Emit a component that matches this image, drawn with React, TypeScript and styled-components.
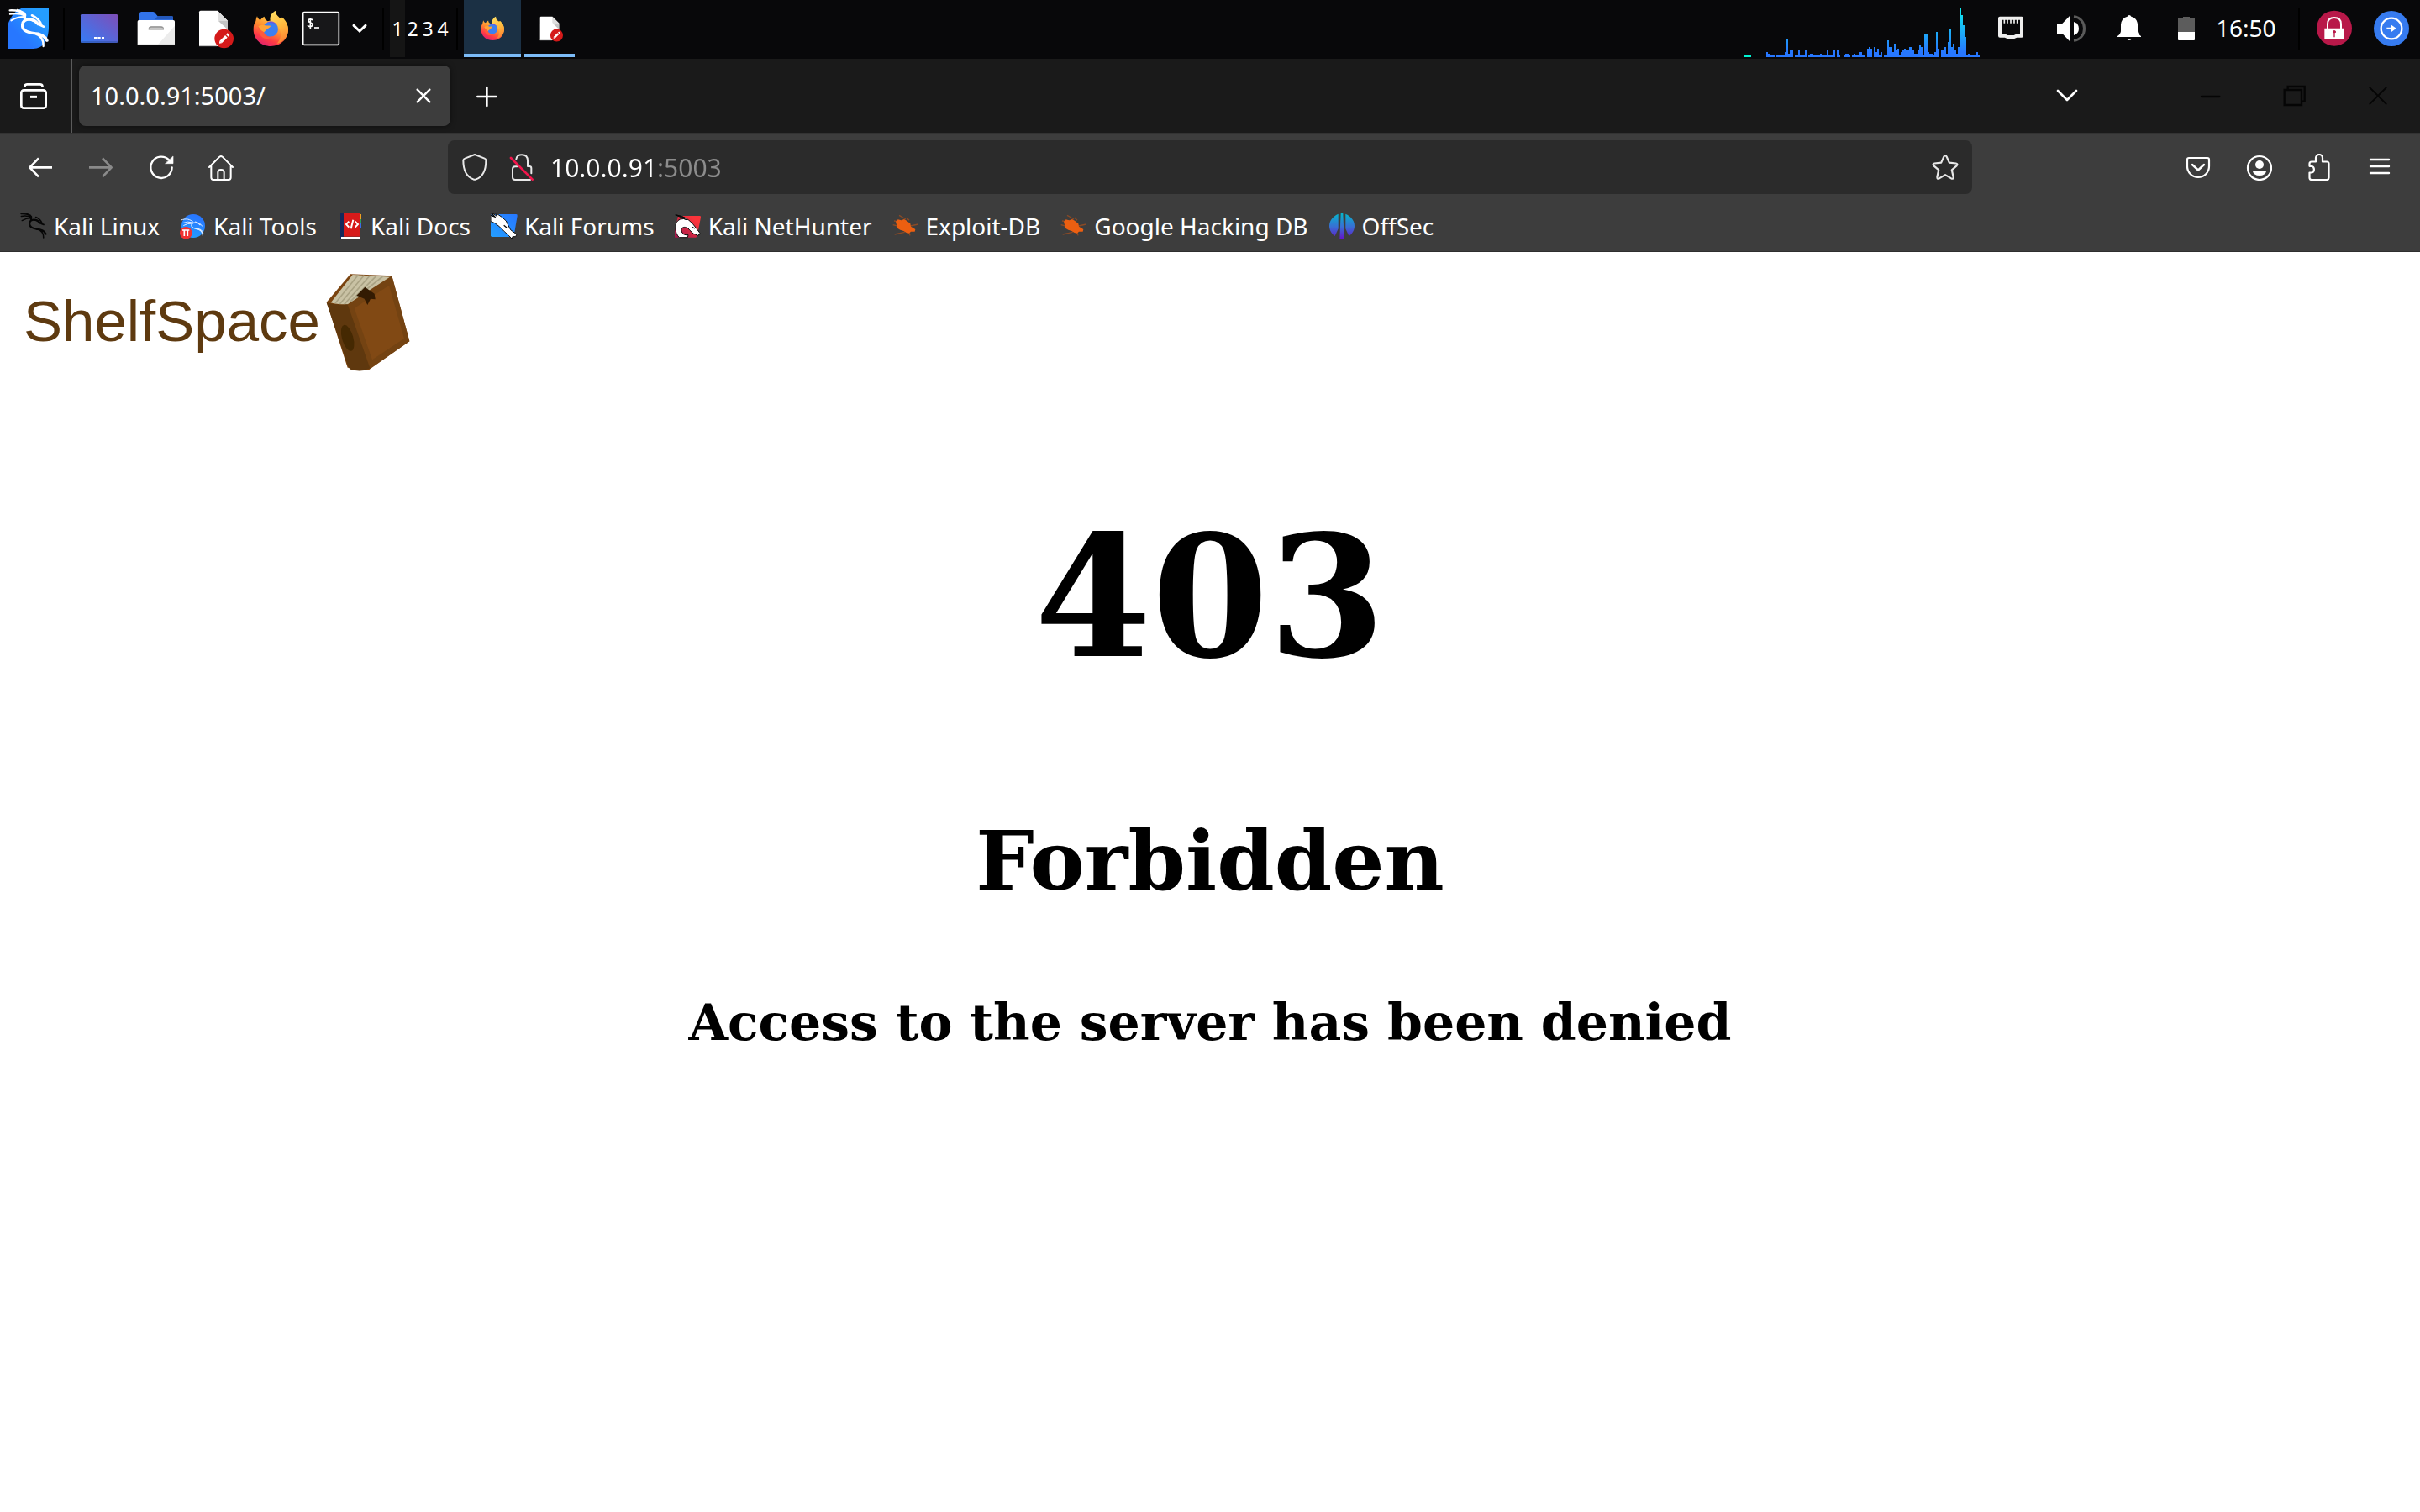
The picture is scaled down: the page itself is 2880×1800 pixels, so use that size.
import React from 'react';
import styled, { createGlobalStyle } from 'styled-components';

const GlobalStyle = createGlobalStyle`
  *, *::before, *::after { box-sizing: border-box; }
  html, body, #root { height: 100%; }
  body {
    margin: 0;
    background: #fff;
    font-family: "Noto Sans", "Open Sans", sans-serif;
    font-size: 28px;
  }
  svg { display: block; flex: none; }
`;

const Screen = styled.div`
  min-height: 100%;
  display: flex;
  flex-direction: column;
`;

/* ---------- desktop panel ---------- */

const Panel = styled.header`
  display: flex;
  align-items: flex-start;
  height: 70px;
  background: #08080a;
  color: #fff;
`;

const PanelGroup = styled.div`
  display: flex;
  height: 68px;
`;

const Filler = styled.div`
  flex: 1;
`;

const PanelButton = styled.button<{ $width?: number; $active?: boolean }>`
  display: flex;
  align-items: center;
  justify-content: center;
  width: ${(p) => p.$width ?? 68}px;
  height: 68px;
  padding: 0;
  border: 0;
  background: ${(p) => (p.$active ? '#1b3044' : 'transparent')};
  color: inherit;
`;

const TaskButton = styled(PanelButton)`
  &::after {
    content: '';
    position: absolute;
    width: ${(p) => (p.$active ? 68 : 60)}px;
    height: 4px;
    top: 64px;
    background: #7cbcf8;
  }
`;

const PanelRule = styled.span`
  width: 2px;
  height: 50px;
  margin: 10px 7px 0;
  background: #000;
`;

const Workspace = styled.button<{ $current?: boolean }>`
  width: 18px;
  height: 68px;
  padding: 0;
  border: 0;
  background: ${(p) => (p.$current ? '#151515' : 'transparent')};
  color: #fff;
  font: 23px/68px "Noto Sans", sans-serif;
  text-align: center;
`;

const GraphArea = styled.div`
  display: flex;
  align-items: flex-end;
  gap: 18px;
  height: 68px;
  margin-right: 8px;
`;

const NetDash = styled.span`
  width: 8px;
  height: 3px;
  background: #00f5d4;
`;

const Clock = styled.time`
  width: 92px;
  padding-left: 1px;
  font-size: 28px;
  line-height: 66px;
`;

/* ---------- browser chrome ---------- */

const TabStrip = styled.div`
  display: flex;
  align-items: center;
  height: 88px;
  background: #1a1a1a;
  color: #fff;
`;

const IconButton = styled.button<{ $width?: number; $tone?: string }>`
  display: flex;
  align-items: center;
  justify-content: center;
  flex: none;
  width: ${(p) => p.$width ?? 72}px;
  height: 64px;
  padding: 0;
  border: 0;
  background: transparent;
  color: ${(p) => p.$tone ?? '#fff'};
`;

const StripRule = styled.span`
  width: 2px;
  height: 88px;
  margin: 0 8px 0 4px;
  background: #5b5b5b;
`;

const Tab = styled.div`
  display: flex;
  align-items: center;
  justify-content: space-between;
  width: 442px;
  height: 72px;
  margin-right: 7px;
  padding-left: 14px;
  border-radius: 8px;
  background: #3d3d3d;
  box-shadow: 0 0 6px rgba(0, 0, 0, 0.5);
`;

const TabTitle = styled.button`
  flex: 1;
  padding: 0;
  border: 0;
  background: transparent;
  color: #fff;
  font: 29px/40px "Noto Sans", sans-serif;
  text-align: left;
`;

const WindowControls = styled.div`
  display: flex;
  margin-left: 84px;
`;

const NavBar = styled.nav`
  display: flex;
  align-items: center;
  height: 81px;
  padding: 0 12px;
  border-top: 1px solid #333;
  background: #3d3d3d;
`;

const AddressBar = styled.form`
  display: flex;
  align-items: center;
  flex: 0 1 1814px;
  height: 64px;
  padding: 0 4px;
  border-radius: 8px;
  background: #2b2b2b;
`;

const AddressInput = styled.input`
  flex: 1;
  height: 64px;
  margin: 0 0 0 6px;
  padding: 0;
  border: 0;
  outline: 0;
  background: linear-gradient(90deg, #fff 126px, #8c8c8c 126px);
  background-clip: text;
  -webkit-text-fill-color: transparent;
  color: #fff;
  font: 30px/40px "Noto Sans", sans-serif;
`;

const Bookmarks = styled.nav`
  display: flex;
  align-items: center;
  gap: 24px;
  height: 61px;
  padding: 0 24px;
  border-bottom: 1px solid #2e2e2e;
  background: #3d3d3d;
`;

const Bookmark = styled.a`
  display: flex;
  align-items: center;
  gap: 8px;
  color: #fff;
  font-size: 28px;
  line-height: 40px;
  text-decoration: none;
  white-space: nowrap;
`;

/* ---------- page ---------- */

const Page = styled.main`
  flex: 1;
  background: #fff;
  color: #000;
`;

const Brand = styled.div`
  display: flex;
  align-items: center;
  gap: 6px;
  padding: 23px 28px 0;
  color: #5e3a10;
  font: 69px/120px "Liberation Sans", Arial, sans-serif;
`;

const ErrorBlock = styled.section`
  padding-top: 152px;
  font-family: "DejaVu Serif", serif;
  text-align: center;
`;

const Code = styled.h1`
  margin: 0 0 141px;
  font-size: 200px;
  line-height: 232px;
`;

const Reason = styled.h2`
  margin: 0 0 100px;
  font-size: 98px;
  line-height: 114px;
`;

const Detail = styled.h3`
  margin: 0;
  font-size: 60px;
  line-height: 70px;
`;

/* ---------- icons ---------- */

const Glyph = ({ box, size = 48, children }: { box: string; size?: number; children: React.ReactNode }) => (
  <svg width={size} height={size} viewBox={box} fill="none" aria-hidden="true">
    {children}
  </svg>
);

const Dragon = () => (
  <g fill="none" stroke="currentColor" strokeLinecap="round" strokeLinejoin="round">
    <path strokeWidth="7" d="M35 37 C58 36 74 38 90 52 M36 50 C58 46 74 48 90 56" />
    <path strokeWidth="6" d="M40 73 C55 64 70 60 88 60 M62 35 C74 38 84 44 91 54" />
    <path strokeWidth="10" d="M84 46 C88 54 90 58 88 66" />
    <path strokeWidth="10" d="M136 86 C120 64 84 62 80 88 C78 108 98 116 122 119" />
    <path strokeWidth="8" d="M110 70 C128 74 134 88 156 95 M114 55 C130 62 142 72 148 90" />
    <path strokeWidth="8" d="M118 118 C142 118 160 124 169 145" />
    <path strokeWidth="7" d="M122 119 C144 126 156 142 155 165 M140 124 C156 128 162 136 166 146" />
  </g>
);

const KaliTile = () => (
  <Glyph box="30 30 144 144">
    <defs>
      <linearGradient id="kali" x1="0" y1="1" x2="1" y2="0">
        <stop offset="0.3" stopColor="#2777ff" />
        <stop offset="0.8" stopColor="#249dff" />
      </linearGradient>
    </defs>
    <path fill="url(#kali)" d="M76 30H174V96C174 140 156 174 118 174H30V82C40 60 50 40 76 30Z" />
    <g color="#fff"><Dragon /></g>
  </Glyph>
);

const DesktopIcon = () => (
  <Glyph box="282 30 144 144">
    <defs>
      <linearGradient id="desk" x1="0" y1="1" x2="1" y2="0">
        <stop offset="0.1" stopColor="#3b78f0" />
        <stop offset="1" stopColor="#7e4eb8" />
      </linearGradient>
    </defs>
    <rect x="288" y="51" width="132" height="102" rx="4" fill="url(#desk)" />
    <path d="M289 150H419" stroke="#2c4d9c" strokeWidth="3" />
    <path fill="#fff" d="M336 132h9v9h-9zM349 132h10v9h-10zM363 132h9v9h-9z" />
  </Glyph>
);

const FolderIcon = () => (
  <Glyph box="486 30 144 144">
    <path fill="#3273e8" d="M504 42H546Q550 42 553 46L563 58H614Q618 58 618 63V90H498V50Q498 42 504 42Z" />
    <path fill="#2458bb" d="M563 58L552 70H618V62Q618 58 614 58Z" />
    <rect x="491" y="72" width="133" height="90" rx="5" fill="#fff" />
    <path fill="#ececec" d="M624 92V157Q624 161 619 161H562Z" />
    <path fill="#bbb" d="M492 158H624Q623 162 618 162H497Q492 162 492 158Z" />
    <path fill="#c6c6c6" d="M530 108Q530 94 541 94H574Q585 94 585 108Z" />
    <path fill="#979797" d="M530 104Q530 94 541 94H574Q585 94 585 104Q582 98 574 98H541Q533 98 530 104Z" />
  </Glyph>
);

const DocIcon = ({ size = 48 }: { size?: number }) => (
  <Glyph size={size} box="690 30 144 144">
    <path fill="#fff" d="M716 38H777L813 74V165H711V43Q711 38 716 38Z" />
    <path fill="#dedede" d="M777 38L813 74H783Q777 74 777 68Z" />
    <path fill="#c4c4c4" d="M779 74H813V106Z" />
    <path stroke="#bcbcbc" strokeWidth="3" d="M711 164H775" />
    <circle cx="800" cy="138" r="34" fill="#d41a1a" />
    <path stroke="#fff" strokeWidth="11" d="M788 150L808 130M811 127L816 122" />
    <path fill="#fff" d="M784 146L792 154L783 155Z" />
  </Glyph>
);

const FirefoxIcon = ({ size = 48 }: { size?: number }) => (
  <Glyph size={size} box="894 30 144 144">
    <defs>
      <linearGradient id="fxBody" x1="0.8" y1="0.1" x2="0.3" y2="1">
        <stop offset="0.1" stopColor="#ffca42" />
        <stop offset="0.45" stopColor="#ff8a30" />
        <stop offset="0.75" stopColor="#ff3b45" />
        <stop offset="1" stopColor="#dd2070" />
      </linearGradient>
      <linearGradient id="fxFlame" x1="0" y1="0" x2="0.3" y2="1">
        <stop offset="0" stopColor="#ffe066" />
        <stop offset="0.6" stopColor="#ffb83e" />
        <stop offset="1" stopColor="#ff8a34" />
      </linearGradient>
    </defs>
    <path
      fill="url(#fxBody)"
      d="M918 58C920 65 923 69 929 72C933 66 938 62 944 59C944 66 948 72 956 76L1008 62C1022 74 1029 90 1029 106C1029 140 1001 165 967 165C932 165 905 140 905 105C905 92 908 82 913 76C914 70 915 64 918 58Z"
    />
    <path
      fill="url(#fxFlame)"
      d="M985 38C982 48 990 55 997 62C1002 67 1006 72 1008 78C1009 74 1009 70 1008 66C1022 78 1029 92 1029 107C1027 132 1010 150 988 156C1004 142 1008 116 994 96C988 88 976 84 966 76C960 58 972 44 985 38Z"
    />
    <circle cx="966" cy="104" r="27" fill="#3d7ff0" />
    <path fill="#7048e0" d="M952 82C962 72 980 74 990 90C980 82 966 80 952 82Z" opacity="0.7" />
    <path
      fill="#ffa436"
      d="M922 94C930 88 940 88 948 91C954 93 960 90 966 92C966 97 960 100 953 103C951 110 946 110 942 116C938 114 928 108 922 94Z"
    />
    <path fill="#ff5a3c" d="M922 94C928 106 936 112 942 115C942 130 958 136 974 130C962 144 936 140 928 122C924 112 922 104 922 94Z" />
  </Glyph>
);

const TerminalIcon = () => (
  <Glyph box="54 30 144 144">
    <rect x="62" y="44" width="128" height="116" rx="4" fill="#171719" stroke="#fff" strokeWidth="5" />
    <path
      stroke="#fff"
      strokeWidth="5"
      d="M96 72C92 67 81 67 81 74C81 82 96 79 96 88C96 97 82 96 78 91M88 63V103"
    />
    <path stroke="#fff" strokeWidth="5" d="M102 99H120" />
  </Glyph>
);

const MenuChevron = () => (
  <Glyph box="192 30 144 144">
    <path d="M243 91L264 111L285 91" stroke="#fff" strokeWidth="9" strokeLinecap="round" />
  </Glyph>
);

const cpuLoad = [
  3, 2, 1, 1, 1, 0, 1, 1, 1, 1, 1, 3, 11, 2, 4, 4, 0, 1, 1, 4, 1, 1, 1, 4, 0, 1, 2, 2, 1, 1, 1, 1, 2, 1, 1, 1, 4, 1, 1,
  1, 4, 0, 4, 1, 0, 0, 1, 2, 2, 1, 0, 1, 2, 1, 1, 3, 3, 1, 1, 0, 5, 6, 5, 0, 6, 3, 5, 1, 3, 0, 1, 1, 10, 6, 6, 3, 8, 4,
  5, 1, 3, 4, 5, 4, 4, 6, 6, 4, 2, 2, 4, 7, 6, 1, 14, 14, 3, 2, 2, 1, 3, 15, 5, 0, 4, 4, 6, 2, 9, 17, 6, 8, 4, 2, 6, 29,
  25, 19, 12, 1, 2, 1, 1, 1, 1, 3, 1,
];

const CpuGraph = () => (
  <svg width="254" height="60" viewBox="0 0 254 60" shapeRendering="crispEdges" aria-label="CPU load">
    <defs>
      <linearGradient id="cpu" gradientUnits="userSpaceOnUse" x1="0" y1="60" x2="0" y2="0">
        <stop offset="0" stopColor="#2777ff" />
        <stop offset="0.1" stopColor="#2777ff" />
        <stop offset="1" stopColor="#0ef0ee" />
      </linearGradient>
    </defs>
    {cpuLoad.map((v, i) => (
      <rect key={i} x={i * 2} y={60 - v * 2} width="2" height={v * 2} fill="url(#cpu)" />
    ))}
  </svg>
);

const EthernetIcon = () => (
  <Glyph box="942 30 144 144">
    <path
      d="M960 65H1038V128H1020L1011 132H987L978 128H960Z"
      stroke="#eee"
      strokeWidth="12"
      strokeLinejoin="round"
    />
    <path d="M976 66V83M987 66V83M999 66V83M1011 66V83M1022 66V83" stroke="#eee" strokeWidth="5" />
  </Glyph>
);

const SpeakerIcon = () => (
  <Glyph box="1146 30 144 144">
    <path fill="#fff" d="M1164 84H1183L1212 54V150L1183 120H1164Z" />
    <path fill="#fff" d="M1224 78Q1242 84 1242 102Q1242 120 1224 126Z" />
    <path d="M1224 59C1274 64 1274 140 1224 145" stroke="#5a5a5a" strokeWidth="9" />
  </Glyph>
);

const BellIcon = () => (
  <Glyph box="150 30 144 144">
    <path
      fill="#fff"
      d="M222 54Q227 54 229 59Q250 64 252 88V112Q253 122 264 129V132H180V129Q191 122 192 112V88Q194 64 215 59Q217 54 222 54ZM212 138H232Q228 144 222 144Q216 144 212 138Z"
    />
  </Glyph>
);

const BatteryIcon = () => (
  <Glyph box="354 30 144 144">
    <path fill="#5c5c5c" d="M414 60H438V66H456V114H396V66H414Z" />
    <path fill="#fff" d="M396 114H456V141Q456 144 453 144H399Q396 144 396 141Z" />
  </Glyph>
);

const LockBadge = () => (
  <Glyph box="882 30 144 144">
    <circle cx="954" cy="101" r="63" fill="#b81849" />
    <path d="M930 104V86Q930 63 954 63Q978 63 978 86V104" stroke="#fff" strokeWidth="6" />
    <path fill="#fff" d="M919 101H989V138Q989 141 986 141H922Q919 141 919 138Z" />
    <path stroke="#b81849" strokeWidth="4" d="M954 112V133M948 114H960" />
    <circle cx="954" cy="113" r="5" fill="#b81849" />
  </Glyph>
);

const LogoutBadge = () => (
  <Glyph box="1086 30 144 144">
    <circle cx="1158" cy="102" r="63" fill="#367bf0" />
    <circle cx="1158" cy="102" r="37" stroke="#fff" strokeWidth="7" />
    <path fill="#fff" d="M1141 98H1158V89L1175 101L1158 114V105H1141Z" />
  </Glyph>
);

const strokeProps = {
  stroke: 'currentColor',
  strokeLinecap: 'round' as const,
  strokeLinejoin: 'round' as const,
};

const ViewIcon = () => (
  <Glyph size={32} box="72 294 96 96">
    <rect x="76" y="322" width="88" height="64" rx="9" {...strokeProps} strokeWidth="8" />
    <path d="M89 306Q90 301 97 301H143Q150 301 151 306" {...strokeProps} strokeLinecap="square" strokeWidth="8" />
    <path d="M108 346H132" stroke="currentColor" strokeWidth="9" />
  </Glyph>
);

const TabClose = () => (
  <Glyph size={32} box="0 0 96 96">
    <path d="M26 26L70 70M70 26L26 70" {...strokeProps} strokeWidth="7" />
  </Glyph>
);

const PlusIcon = () => (
  <Glyph size={32} box="0 0 96 96">
    <path d="M49 18V84M16 51H82" {...strokeProps} strokeWidth="8" />
  </Glyph>
);

const TabsChevron = () => (
  <Glyph size={32} box="0 0 96 96">
    <path d="M15 30L48 63L81 30" {...strokeProps} strokeWidth="8" />
  </Glyph>
);

const MinimizeIcon = () => (
  <Glyph size={32} box="0 0 96 96">
    <path d="M18 51H82" {...strokeProps} strokeWidth="7" />
  </Glyph>
);

const RestoreIcon = () => (
  <Glyph size={32} box="763 294 96 96">
    <path d="M777 321H838V375H777Z" stroke="currentColor" strokeWidth="7" />
    <path d="M789 321V309H849V362H838" stroke="currentColor" strokeWidth="7" />
  </Glyph>
);

const CloseIcon = () => (
  <Glyph size={32} box="1062 294 96 96">
    <path d="M1081 313L1139 371M1139 313L1081 371" {...strokeProps} strokeWidth="6" />
  </Glyph>
);

const BackIcon = () => (
  <Glyph size={32} box="96 84 96 96">
    <path d="M106 133H186M138 100L106 133L138 166" stroke="currentColor" strokeWidth="8" strokeLinejoin="round" />
  </Glyph>
);

const ForwardIcon = () => (
  <Glyph size={32} box="312 84 96 96">
    <path d="M318 133H398M366 100L398 133L366 166" stroke="currentColor" strokeWidth="8" strokeLinejoin="round" />
  </Glyph>
);

const ReloadIcon = () => (
  <Glyph size={32} box="528 84 96 96">
    <path d="M603 106A38 38 0 1 0 614 133" stroke="currentColor" strokeWidth="7" strokeLinecap="round" />
    <path d="M618 94V119H591Z" fill="currentColor" {...strokeProps} strokeWidth="2" />
  </Glyph>
);

const HomeIcon = () => (
  <Glyph size={32} box="744 84 96 96">
    <path
      d="M747 132L784 95Q789 91 794 95L831 132M754 127V169Q754 177 762 177H816Q824 177 824 169V127M778 177V150Q778 141 789 141Q800 141 800 150V177"
      {...strokeProps}
      strokeWidth="6"
    />
  </Glyph>
);

const ShieldIcon = () => (
  <Glyph size={32} box="327 84 96 96">
    <path
      d="M375 87L410 101Q415 103 415 108C415 145 402 167 380 175Q375 178 370 175C348 167 334 145 334 108Q334 103 340 101Z"
      {...strokeProps}
      strokeWidth="6"
    />
  </Glyph>
);

const InsecureIcon = () => (
  <Glyph size={32} box="495 84 96 96">
    <path
      d="M523 103Q526 88 543 88Q564 88 564 109V129M564 129H570Q577 129 577 136V154M573 177H519Q510 177 510 168V139Q510 130 519 130H526"
      {...strokeProps}
      strokeWidth="6"
    />
    <path d="M504 99L581 176" stroke="#f2164c" strokeWidth="8" strokeLinecap="round" />
  </Glyph>
);

const StarIcon = () => (
  <Glyph size={32} box="0 0 32 32">
    <path
      d="M14.3 3.6Q16 .8 17.7 3.6L20.8 10.6L28.8 11.5Q31.6 12.1 29.6 14.4L23.8 19.3L25.6 27.6Q25.9 30.6 23.2 29.4L16 25.1L8.8 29.4Q6.1 30.6 6.4 27.6L8.2 19.3L2.4 14.4Q.4 12.1 3.2 11.5L11.2 10.6Z"
      {...strokeProps}
      strokeWidth="2.2"
    />
  </Glyph>
);

const PocketIcon = () => (
  <Glyph size={32} box="0 0 32 32">
    <path d="M5 5H27Q29 5 29 7V15A13 13 0 0 1 3 15V7Q3 5 5 5Z" {...strokeProps} strokeWidth="2.2" />
    <path d="M9 13L16 19.5L23 13" {...strokeProps} strokeWidth="2.4" />
  </Glyph>
);

const AccountIcon = () => (
  <Glyph size={32} box="-1 0 32 32">
    <circle cx="16" cy="17" r="14" stroke="currentColor" strokeWidth="2.2" />
    <circle cx="16" cy="13" r="5" fill="currentColor" />
    <path d="M7.6 20H24.4Q23 26 16 26Q9 26 7.6 20Z" fill="currentColor" />
  </Glyph>
);

const PuzzleIcon = () => (
  <Glyph size={32} box="-1 0 32 32">
    <path
      d="M6 9.5H11V5A4 4 0 0 1 19 5V9.5H24Q26.5 9.5 26.5 12V28.5Q26.5 31 24 31H6Q3.5 31 3.5 28.5V22.5H6A4 4 0 0 0 6 14.8H3.5V12Q3.5 9.5 6 9.5Z"
      {...strokeProps}
      strokeWidth="2.2"
    />
  </Glyph>
);

const BurgerIcon = () => (
  <Glyph size={32} box="0 0 32 32">
    <path d="M5 7H27M5 15H27M5 23H27" {...strokeProps} strokeWidth="2.4" />
  </Glyph>
);

const KaliMark = () => (
  <Glyph size={32} box="30 30 144 144">
    <g color="#060606"><Dragon /></g>
  </Glyph>
);

const ToolsMark = () => (
  <Glyph size={32} box="636 294 96 96">
    <defs>
      <linearGradient id="tools" x1="0" y1="1" x2="0.4" y2="0">
        <stop offset="0" stopColor="#22a3ff" />
        <stop offset="1" stopColor="#2877ff" />
      </linearGradient>
    </defs>
    <circle cx="684" cy="342" r="42" fill="url(#tools)" />
    <g stroke="#e3efff" strokeLinecap="round" strokeWidth="3">
      <path d="M640 321C660 314 672 318 684 328M648 331Q664 324 682 330M650 340Q664 332 680 333" />
      <path strokeWidth="4" d="M708 338C696 324 676 330 678 342C680 354 700 350 712 360Q718 366 718 375" />
      <path d="M692 327Q708 330 716 342M700 352Q716 354 719 366" />
    </g>
    <circle cx="658" cy="367" r="22" fill="#f23232" />
    <path d="M645 357H670M652 356V378M664 356V378" stroke="#fff" strokeWidth="5" />
  </Glyph>
);

const DocsMark = () => (
  <Glyph size={32} box="1203 294 96 96">
    <path fill="#f0a020" d="M1286 300h4v18h-4z" />
    <path fill="#2aa35a" d="M1286 318h4v14h-4z" />
    <path fill="#3a6ee8" d="M1286 332h4v18h-4z" />
    <path fill="#16295a" d="M1215 294H1230V390H1215Z" />
    <path fill="#d71a1a" d="M1227 294H1287V380H1227Z" />
    <path fill="#fff" d="M1218 381H1287V387H1218Z" />
    <path
      d="M1246 326L1236 336L1246 347M1268 326L1278 336L1268 347M1261 320L1253 352"
      stroke="#fff"
      strokeWidth="6"
    />
  </Glyph>
);

const ForumsMark = () => (
  <Glyph size={32} box="435 294 96 96">
    <defs>
      <linearGradient id="forums" x1="0" y1="1" x2="1" y2="0">
        <stop offset="0" stopColor="#249fff" />
        <stop offset="1" stopColor="#2777ff" />
      </linearGradient>
    </defs>
    <path fill="url(#forums)" d="M440 300H526Q531 300 530 306L518 376Q517 381 511 381H440Q435 381 435 376V305Q435 300 440 300Z" />
    <path
      fill="#fff"
      stroke="#0a0a0a"
      strokeWidth="3"
      d="M435 304L446 309L440 295L458 308L452 295Q480 312 490 324Q496 338 506 356L528 372L524 380L513 380L511 388Q500 376 484 362Q468 344 450 332L435 326Z"
    />
    <path d="M438 296L452 312M482 340L492 348" stroke="#0a0a0a" strokeWidth="4" />
  </Glyph>
);

const HunterMark = () => (
  <Glyph size={32} box="1092 294 96 96">
    <defs>
      <linearGradient id="hunter" x1="0" y1="1" x2="1" y2="0">
        <stop offset="0" stopColor="#a0184e" />
        <stop offset="0.8" stopColor="#fb343a" />
      </linearGradient>
    </defs>
    <path fill="url(#hunter)" d="M1104 306H1182Q1186 306 1185 311L1172 378Q1171 383 1166 383H1092V360Z" />
    <path
      fill="#fff"
      stroke="#0a0a0a"
      strokeWidth="3"
      d="M1108 383C1090 366 1088 326 1112 318Q1124 314 1134 320L1096 303Q1130 306 1156 334L1170 352L1184 370L1174 376Q1158 372 1146 358C1136 342 1114 342 1116 360Q1120 376 1140 374L1138 383Z"
    />
    <path d="M1094 302L1126 312M1154 346L1164 351" stroke="#0a0a0a" strokeWidth="4" />
  </Glyph>
);

const BugMark = () => (
  <Glyph size={32} box="546 294 96 96">
    <path
      d="M552 324L568 326M570 304L594 318M596 312L606 322M638 336L610 342M554 372L590 364M609 376L604 360M548 338L564 342"
      stroke="#8a4a26"
      strokeWidth="4"
    />
    <path
      fill="#ec5f11"
      d="M558 326L566 319L578 322L588 318L598 324L610 334L612 344L628 354L626 362L612 362L606 368L596 366L586 360L574 356L564 350L561 338Z"
    />
  </Glyph>
);

const OffSecMark = () => (
  <Glyph size={32} box="792 294 96 96">
    <defs>
      <linearGradient id="offsec" gradientUnits="userSpaceOnUse" x1="0" y1="296" x2="0" y2="388">
        <stop offset="0" stopColor="#04b8cc" />
        <stop offset="0.55" stopColor="#3a6cd4" />
        <stop offset="1" stopColor="#6414c8" />
      </linearGradient>
    </defs>
    <g fill="url(#offsec)">
      <path d="M827 299V352L815 378C789 362 784 318 827 299Z" />
      <path d="M853 299V352L865 378C891 362 896 318 853 299Z" />
      <path d="M836 297H844L848 387H832Z" />
    </g>
  </Glyph>
);

const BookArt = () => (
  <svg width="102" height="120" viewBox="1160 96 306 360" role="img" aria-label="Book">
    <path fill="#7a430f" d="M1250 106L1398 112L1461 346L1316 448L1240 440L1165 206Z" />
    <path fill="#c9c2a4" d="M1258 108L1396 116L1244 214Q1205 216 1180 208Z" />
    <path
      d="M1278 109L1196 210M1299 110L1212 213M1320 111L1228 214M1342 113L1246 208M1366 114L1270 190"
      stroke="#aaa384"
      strokeWidth="5"
    />
    <path fill="#744312" d="M1240 214L1398 112L1461 346L1316 446Z" />
    <path fill="#814914" d="M1264 228L1388 146L1442 336L1328 412Z" />
    <path fill="#5f380e" d="M1165 208Q1200 218 1240 214L1320 442Q1290 458 1250 446Q1244 442 1242 436Z" />
    <ellipse cx="1240" cy="334" rx="20" ry="48" transform="rotate(-16 1240 334)" fill="#452902" />
    <path fill="#331b02" d="M1272 182L1302 152L1336 176L1339 196L1322 194L1311 216L1300 194Z" />
  </svg>
);

const bookmarks = [
  { label: 'Kali Linux', icon: <KaliMark /> },
  { label: 'Kali Tools', icon: <ToolsMark /> },
  { label: 'Kali Docs', icon: <DocsMark /> },
  { label: 'Kali Forums', icon: <ForumsMark /> },
  { label: 'Kali NetHunter', icon: <HunterMark /> },
  { label: 'Exploit-DB', icon: <BugMark /> },
  { label: 'Google Hacking DB', icon: <BugMark /> },
  { label: 'OffSec', icon: <OffSecMark /> },
];

export default function App() {
  return (
    <Screen>
      <GlobalStyle />
      <Panel>
        <PanelGroup>
          <PanelButton aria-label="Applications"><KaliTile /></PanelButton>
          <PanelRule />
          <PanelButton aria-label="Show desktop"><DesktopIcon /></PanelButton>
          <PanelButton aria-label="Files"><FolderIcon /></PanelButton>
          <PanelButton aria-label="Text editor"><DocIcon /></PanelButton>
          <PanelButton aria-label="Firefox"><FirefoxIcon /></PanelButton>
          <PanelButton $width={52} aria-label="Terminal"><TerminalIcon /></PanelButton>
          <PanelButton $width={40} aria-label="More terminals"><MenuChevron /></PanelButton>
          <PanelRule />
          {[1, 2, 3, 4].map((n) => (
            <Workspace key={n} $current={n === 1}>{n}</Workspace>
          ))}
          <PanelRule />
          <TaskButton $active aria-label="Firefox window"><FirefoxIcon size={32} /></TaskButton>
          <TaskButton aria-label="Editor window"><DocIcon size={32} /></TaskButton>
        </PanelGroup>
        <Filler />
        <GraphArea>
          <NetDash />
          <CpuGraph />
        </GraphArea>
        <PanelGroup>
          <PanelButton aria-label="Network"><EthernetIcon /></PanelButton>
          <PanelButton aria-label="Volume"><SpeakerIcon /></PanelButton>
          <PanelButton aria-label="Notifications"><BellIcon /></PanelButton>
          <PanelButton aria-label="Battery"><BatteryIcon /></PanelButton>
          <Clock>16:50</Clock>
          <PanelRule />
          <PanelButton aria-label="Lock screen"><LockBadge /></PanelButton>
          <PanelButton aria-label="Log out"><LogoutBadge /></PanelButton>
        </PanelGroup>
      </Panel>

      <TabStrip>
        <IconButton $width={80} aria-label="Firefox View"><ViewIcon /></IconButton>
        <StripRule />
        <Tab>
          <TabTitle>10.0.0.91:5003/</TabTitle>
          <IconButton $width={64} aria-label="Close tab"><TabClose /></IconButton>
        </Tab>
        <IconButton aria-label="New tab"><PlusIcon /></IconButton>
        <Filler />
        <IconButton aria-label="List all tabs"><TabsChevron /></IconButton>
        <WindowControls>
          <IconButton $width={100} $tone="#050505" aria-label="Minimize"><MinimizeIcon /></IconButton>
          <IconButton $width={100} $tone="#050505" aria-label="Restore"><RestoreIcon /></IconButton>
          <IconButton $width={100} $tone="#050505" aria-label="Close"><CloseIcon /></IconButton>
        </WindowControls>
      </TabStrip>

      <NavBar aria-label="Navigation">
        <IconButton aria-label="Back"><BackIcon /></IconButton>
        <IconButton $tone="#8a8a8a" aria-label="Forward"><ForwardIcon /></IconButton>
        <IconButton aria-label="Reload"><ReloadIcon /></IconButton>
        <IconButton aria-label="Home"><HomeIcon /></IconButton>
        <Filler />
        <AddressBar>
          <IconButton type="button" $width={56} $tone="#e8e8e8" aria-label="Tracking protection"><ShieldIcon /></IconButton>
          <IconButton type="button" $width={56} $tone="#e8e8e8" aria-label="Connection not secure"><InsecureIcon /></IconButton>
          <AddressInput aria-label="Address" defaultValue="10.0.0.91:5003" spellCheck={false} />
          <IconButton type="button" $width={56} $tone="#e8e8e8" aria-label="Bookmark this page"><StarIcon /></IconButton>
        </AddressBar>
        <Filler />
        <IconButton aria-label="Save to Pocket"><PocketIcon /></IconButton>
        <IconButton aria-label="Account"><AccountIcon /></IconButton>
        <IconButton aria-label="Extensions"><PuzzleIcon /></IconButton>
        <IconButton aria-label="Menu"><BurgerIcon /></IconButton>
      </NavBar>

      <Bookmarks aria-label="Bookmarks">
        {bookmarks.map((b) => (
          <Bookmark key={b.label} href="#">
            {b.icon}
            <span>{b.label}</span>
          </Bookmark>
        ))}
      </Bookmarks>

      <Page>
        <Brand>
          <span>ShelfSpace</span>
          <BookArt />
        </Brand>
        <ErrorBlock>
          <Code>403</Code>
          <Reason>Forbidden</Reason>
          <Detail>Access to the server has been denied</Detail>
        </ErrorBlock>
      </Page>
    </Screen>
  );
}
